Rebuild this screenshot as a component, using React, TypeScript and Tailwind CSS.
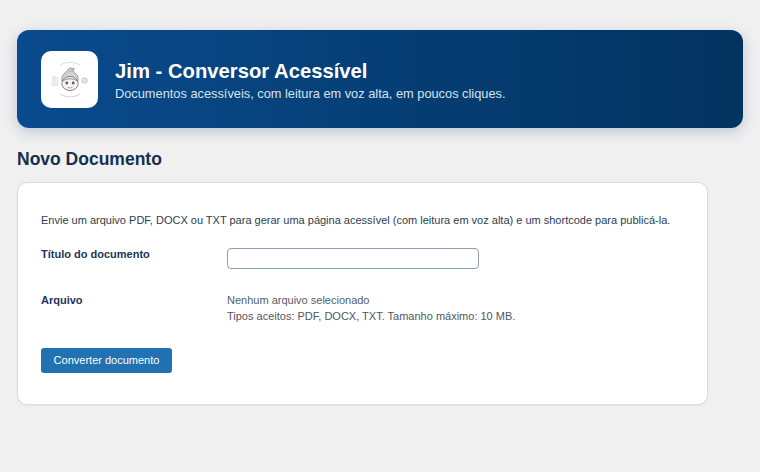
export default function App() {
  return (
    <div className="min-h-[472px] bg-[#f0f0f1] pl-[17px] pr-[17px] pt-[30px] pb-[67px] font-['Liberation_Sans',Arial,sans-serif] text-[11px] text-[#2c3e50]">
      <header className="flex h-[98px] w-[726px] items-center gap-[17px] rounded-xl bg-gradient-to-r from-[#0a4b8e] to-[#03335f] pl-6 shadow-[0_4px_14px_rgba(10,60,110,0.22)]">
        <div className="mt-[1px] flex h-[57px] w-[57px] items-center justify-center rounded-[10px] bg-white">
          <svg width="44" height="44" viewBox="0 0 44 44" fill="none">
            <path d="M12 7 Q22 1.5 32 7" stroke="#d3d5da" strokeWidth="0.8" />
            <path d="M12 36 Q22 42 32 36" stroke="#c2c5cc" strokeWidth="0.8" />
            <path d="M4.5 18.5 h3.5 l2 2 v7 h-5.5 z" fill="#eceded" stroke="#d2d4d8" strokeWidth="0.5" />
            <circle cx="36.5" cy="22.5" r="2.8" fill="#dfe4e6" stroke="#b6bcc2" strokeWidth="0.7" />
            <path d="M14 23 C13 17 17 15 19 13.5 C19 10.5 23 9 26.5 11 C24.5 12 25 13.5 27 15 C30 17.5 30.5 20 30 23 Z" fill="#d6d2d3" stroke="#85818a" strokeWidth="0.8" />
            <path d="M21 14 Q23 12 25 13" stroke="#85818a" strokeWidth="0.6" />
            <ellipse cx="22" cy="25.5" rx="8.2" ry="7" fill="#f8f3ee" stroke="#77737c" strokeWidth="0.9" />
            <path d="M14.2 23 Q22 18.5 29.8 23" stroke="#77737c" strokeWidth="0.8" />
            <circle cx="18.8" cy="25" r="1.4" fill="#5a5a66" />
            <circle cx="25.2" cy="25" r="1.4" fill="#5a5a66" />
            <path d="M19.5 29 Q22 31 24.5 29" stroke="#8a8a8a" strokeWidth="0.7" />
          </svg>
        </div>
        <div className="mt-[2px]">
          <h1 className="text-[20.25px] leading-[23px] font-bold text-white">Jim - Conversor Acessível</h1>
          <p className="mt-[3px] text-[12.8px] leading-[15px] text-[#d6e3ef]">Documentos acessíveis, com leitura em voz alta, em poucos cliques.</p>
        </div>
      </header>
      <h2 className="mt-[21px] text-[17.5px] leading-[20px] font-bold text-[#14304f]">Novo Documento</h2>
      <main className="mt-[13px] h-[223px] w-[691px] rounded-[10px] border border-[#dcdcde] bg-white pl-[23px] pt-[30px] shadow-[0_1px_2px_rgba(0,0,0,0.05)]">
        <p className="text-[11px] leading-[15px]">Envie um arquivo PDF, DOCX ou TXT para gerar uma página acessível (com leitura em voz alta) e um shortcode para publicá-la.</p>
        <div className="mt-[20px] flex">
          <label className="w-[186px] text-[11px] leading-[13px] font-bold text-[#1d3557]">Título do documento</label>
          <input className="h-[21px] w-[252px] rounded-[4px] border border-[#8c9fb5] bg-white" />
        </div>
        <div className="mt-[23px] flex">
          <label className="w-[186px] text-[11px] leading-[16px] font-bold text-[#1d3557]">Arquivo</label>
          <div className="text-[11px] leading-[16px] text-[#50575e]">
            <div className="text-[#52606e]">Nenhum arquivo selecionado</div>
            <div>Tipos aceitos: PDF, DOCX, TXT. Tamanho máximo: 10 MB.</div>
          </div>
        </div>
        <button className="mt-[24px] block h-[25px] w-[131px] rounded-[3px] bg-[#2271b1] text-center text-[11px] text-white">Converter documento</button>
      </main>
    </div>
  );
}
